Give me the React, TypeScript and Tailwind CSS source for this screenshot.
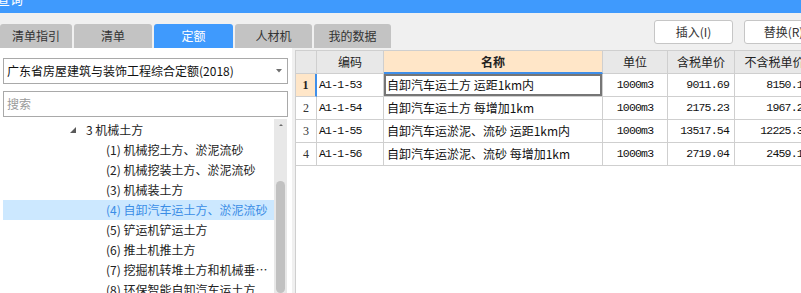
import { useState } from 'react'

const tabs = [
    { name: '清单指引', w: 'w-[72px]' },
    { name: '清单', w: 'w-[78px]' },
    { name: '定额', w: 'w-[79px]' },
    { name: '人材机', w: 'w-[77px]' },
    { name: '我的数据', w: 'w-[77px]' },
]

const treeItems = [
    '(1) 机械挖土方、淤泥流砂',
    '(2) 机械挖装土方、淤泥流砂',
    '(3) 机械装土方',
    '(4) 自卸汽车运土方、淤泥流砂',
    '(5) 铲运机铲运土方',
    '(6) 推土机推土方',
    '(7) 挖掘机转堆土方和机械垂直运输土方',
    '(8) 环保智能自卸汽车运土方',
]

const rows = [
    { code: 'A1-1-53', name: '自卸汽车运土方 运距1km内', unit: '1000m3', tax: '9011.69', noTax: '8150.14' },
    { code: 'A1-1-54', name: '自卸汽车运土方 每增加1km', unit: '1000m3', tax: '2175.23', noTax: '1967.28' },
    { code: 'A1-1-55', name: '自卸汽车运淤泥、流砂 运距1km内', unit: '1000m3', tax: '13517.54', noTax: '12225.36' },
    { code: 'A1-1-56', name: '自卸汽车运淤泥、流砂 每增加1km', unit: '1000m3', tax: '2719.04', noTax: '2459.14' },
]

const mono = "font-['Liberation_Mono','Noto_Sans_CJK_SC',monospace] text-[11.5px] tracking-[-0.8px] text-[#111]"

export default function App() {
    const [active, setActive] = useState(2)
    const [selected, setSelected] = useState(3)

    return (
        <div className="w-[801px] h-[293px] overflow-hidden bg-[#f0f0f0] font-['Noto_Sans_CJK_SC',sans-serif] text-[12px] text-[#222]">
            {/* title bar, mostly scrolled off */}
            <div className="h-[13px] bg-[#3f9afd] overflow-hidden">
                <div className="-mt-[8px] -ml-[3px] leading-[14px] text-[13px] text-white">查询</div>
            </div>

            {/* tabs + buttons */}
            <div className="flex h-[35px]">
                <div className="flex gap-[2px] mt-[11px] h-[24px]">
                    {tabs.map((t, i) => (
                        <div
                            key={t.name}
                            onClick={() => setActive(i)}
                            className={`${t.w} h-[24px] rounded-t-[3px] flex items-center justify-center text-[12px] cursor-default ${i === active ? 'bg-[#3f9afd] text-white' : 'bg-[#c3c3c3] text-[#333]'}`}
                        >
                            {t.name}
                        </div>
                    ))}
                </div>
                <div className="flex gap-[11px] mt-[7px] ml-[263px] shrink-0">
                    <button className="w-[79px] h-[24px] rounded-[3px] border border-[#c6c6c6] bg-white text-[12px] text-[#333]">插入(I)</button>
                    <button className="w-[79px] h-[24px] rounded-[3px] border border-[#c6c6c6] bg-white text-[12px] text-[#333]">替换(R)</button>
                </div>
            </div>

            <div className="flex h-[245px]">
                {/* left panel */}
                <div className="w-[292px] shrink-0 bg-white pl-[3px] pt-[10px] flex flex-col">
                    <div className="w-[285px] h-[26px] border border-[#a9a9a9] flex items-center pl-[3px] pr-[5px]">
                        <span className="flex-1 text-[12px] text-[#111]">广东省房屋建筑与装饰工程综合定额(2018)</span>
                        <svg width="6" height="4" viewBox="0 0 6 4"><polygon points="0,0 6,0 3,3.5" fill="#6f6f6f" /></svg>
                    </div>
                    <div className="w-[285px] h-[26px] mt-[7px] border border-[#a9a9a9] flex items-center pl-[3px] text-[#9a9a9a]">搜索</div>
                    <div className="flex mt-[2px] flex-1 min-h-0">
                        <div className="w-[271px] pt-[1px] overflow-hidden">
                            <div className="h-[20px] flex items-center">
                                <svg className="ml-[67px]" width="6" height="6" viewBox="0 0 6 6"><polygon points="6,0 6,6 0,6" fill="#5a5a5a" /></svg>
                                <span className="ml-[10px] leading-[20px]">3 机械土方</span>
                            </div>
                            {treeItems.map((item, i) => (
                                <div
                                    key={item}
                                    onClick={() => setSelected(i)}
                                    className={`h-[20px] leading-[20px] pl-[103px] pr-[5px] truncate ${i === selected ? 'bg-[#cce8ff] text-[#3a8de6]' : ''}`}
                                >
                                    {item}
                                </div>
                            ))}
                        </div>
                        <div className="w-[13px] bg-[#e8e8e8] flex flex-col items-center">
                            <svg className="mt-[5px]" width="8" height="4" viewBox="0 0 8 4"><polygon points="4,0 8,4 0,4" fill="#6e6e6e" /></svg>
                            <div className="w-[9px] h-[200px] mt-[55px] rounded-full bg-[#c1c1c1]" />
                        </div>
                    </div>
                </div>

                {/* table */}
                <div className="flex-1 min-w-0 pl-[3px] pt-[2px] overflow-hidden">
                    <div className="h-full bg-white border-l border-t border-[#cfcfcf] w-[520px]">
                        <div className="flex h-[23px]">
                            <div className="w-[21px] shrink-0 bg-[#e8e8e8] border-r border-b border-[#cfcfcf]" />
                            <div className="w-[67px] shrink-0 bg-[#e8e8e8] border-r border-b border-[#cfcfcf] flex items-center justify-center">编码</div>
                            <div className="w-[219px] shrink-0 bg-[#ffe6c8] border-r border-[#cfcfcf] border-b-2 border-b-[#3f8fea] flex items-center justify-center font-bold">名称</div>
                            <div className="w-[65px] shrink-0 bg-[#e8e8e8] border-r border-b border-[#cfcfcf] flex items-center justify-center">单位</div>
                            <div className="w-[67px] shrink-0 bg-[#e8e8e8] border-r border-b border-[#cfcfcf] flex items-center justify-center">含税单价</div>
                            <div className="w-[80px] shrink-0 bg-[#e8e8e8] border-r border-b border-[#cfcfcf] flex items-center justify-center">不含税单价</div>
                        </div>
                        {rows.map((r, i) => (
                            <div key={r.code} className="flex h-[23px]">
                                <div className={`w-[21px] shrink-0 border-b border-[#cfcfcf] flex items-center justify-center font-['Liberation_Serif',serif] text-[12px] ${i === 0 ? 'bg-[#ffe6c8] border-r-2 border-r-[#3f8fea] font-bold' : 'border-r text-[#333]'}`}>{i + 1}</div>
                                <div className={`w-[67px] shrink-0 border-r border-b border-[#cfcfcf] flex items-center pl-[2px] ${mono}`}>{r.code}</div>
                                <div className={`w-[219px] shrink-0 border-r border-b border-[#cfcfcf] flex items-center pl-[3px] whitespace-nowrap font-['Noto_Sans_CJK_SC',sans-serif] text-[12px] text-[#111] ${i === 0 ? 'shadow-[inset_0_0_0_2px_#767676]' : ''}`}>{r.name}</div>
                                <div className={`w-[65px] shrink-0 border-r border-b border-[#cfcfcf] flex items-center justify-center ${mono}`}>{r.unit}</div>
                                <div className={`w-[67px] shrink-0 border-r border-b border-[#cfcfcf] flex items-center justify-end pr-[5px] ${mono}`}>{r.tax}</div>
                                <div className={`w-[80px] shrink-0 border-r border-b border-[#cfcfcf] flex items-center justify-end pr-[5px] ${mono}`}>{r.noTax}</div>
                            </div>
                        ))}
                    </div>
                </div>
            </div>
        </div>
    )
}
